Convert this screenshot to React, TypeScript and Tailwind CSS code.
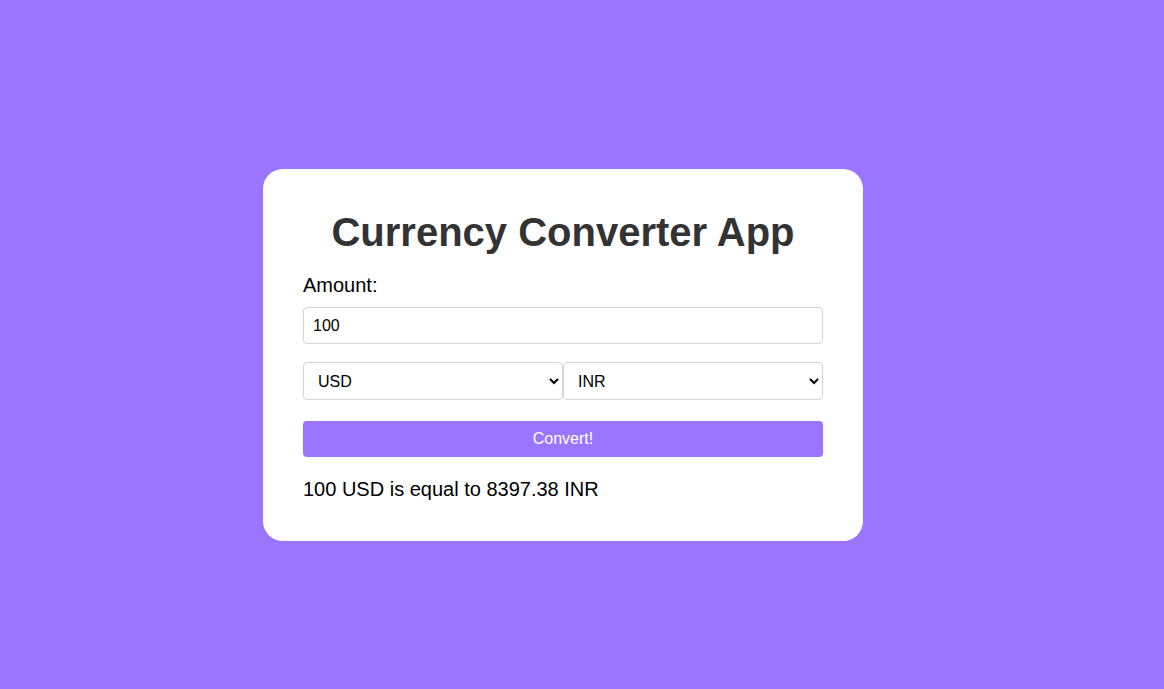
import { useState } from 'react';

export default function App() {
  const [amount, setAmount] = useState('100');
  const [from, setFrom] = useState('USD');
  const [to, setTo] = useState('INR');

  return (
    <div className="min-h-screen w-full bg-[#9a76ff] flex items-center justify-center pr-[38px] pt-[21px] font-['Liberation_Sans',Arial,sans-serif]">
      <div className="w-[600px] bg-white rounded-[20px] p-10 flex flex-col">
        <h1 className="text-[40px] leading-[46px] font-bold text-[#333] text-center">
          Currency Converter App
        </h1>
        <label className="mt-[19px] text-[20px] leading-[23px] text-black">Amount:</label>
        <input
          value={amount}
          onChange={(e) => setAmount(e.target.value)}
          className="mt-[10px] h-[37px] w-full border border-[#d4d4d4] rounded-[4px] px-[9px] text-[16px] text-black outline-none"
        />
        <div className="mt-[18px] flex">
          <select
            value={from}
            onChange={(e) => setFrom(e.target.value)}
            className="h-[38px] w-1/2 border border-[#d4d4d4] rounded-[4px] pl-[10px] pr-1 text-[16px] text-black bg-white"
          >
            <option>USD</option>
            <option>EUR</option>
            <option>INR</option>
          </select>
          <select
            value={to}
            onChange={(e) => setTo(e.target.value)}
            className="h-[38px] w-1/2 border border-[#d4d4d4] rounded-[4px] pl-[10px] pr-1 text-[16px] text-black bg-white"
          >
            <option>USD</option>
            <option>EUR</option>
            <option>INR</option>
          </select>
        </div>
        <button className="mt-[21px] h-[36px] w-full rounded-[4px] bg-[#9a76ff] text-white text-[16px]">
          Convert!
        </button>
        <p className="mt-[21px] text-[20px] leading-[23px] text-black">
          100 USD is equal to 8397.38 INR
        </p>
      </div>
    </div>
  );
}
